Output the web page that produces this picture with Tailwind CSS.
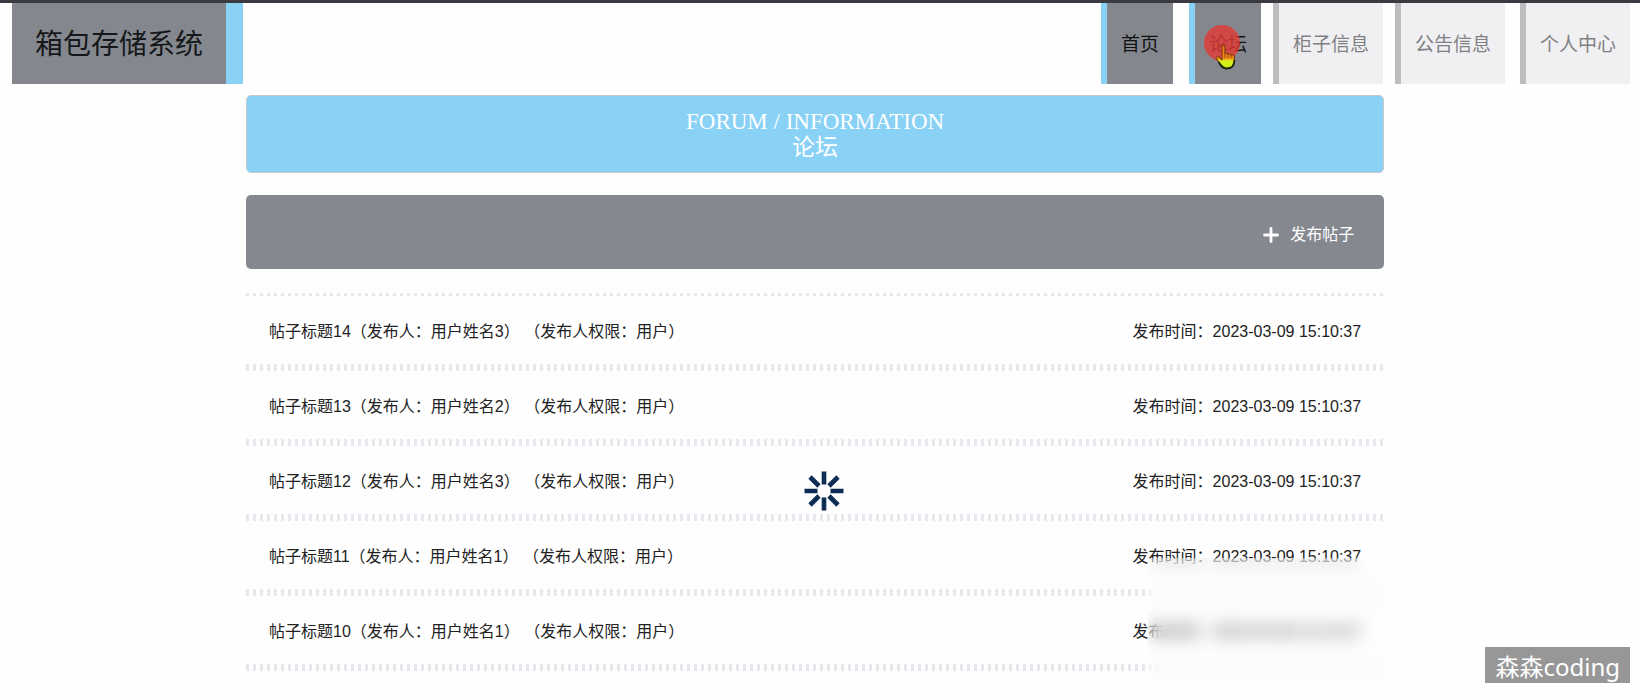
<!DOCTYPE html>
<html lang="zh-CN">
<head>
<meta charset="utf-8">
<meta name="viewport" content="width=device-width, initial-scale=1">
<title>箱包存储系统</title>
<script src="https://cdn.jsdelivr.net/npm/@tailwindcss/browser@4"></script>
</head>
<body class="relative h-screen overflow-hidden border-t-[3px] border-[#3a3a40] bg-[#fefefe] font-['Liberation_Sans','Noto_Sans_CJK_SC',sans-serif] text-base text-[#222]">
  <header class="flex justify-between pr-2.5 pl-3">
    <h1 class="flex h-[81px] items-center border-r-[17px] border-[#8ad1f6] bg-[#84888e] px-[23px] pt-0.5 text-[28px] text-[#15171a]">箱包存储系统</h1>
    <nav class="flex text-[19px] text-[#808084]">
      <a href="#" class="mr-4 flex items-center border-l-[6px] border-[#8ad1f6] bg-[#84888e] px-3.5 pt-[3px] text-[#111]">首页</a>
      <a href="#" class="relative mr-3 flex items-center border-l-[6px] border-[#8ad1f6] bg-[#84888e] px-3.5 pt-[3px] text-[#111]">论坛
        <span class="absolute top-[22px] left-[9px] size-9 rounded-full bg-[#e53935]/80"></span>
        <svg class="absolute top-[41px] left-5" width="22" height="26" viewBox="0 0 22 26">
          <defs><linearGradient id="hand" x1="0" y1="0" x2="0" y2="1"><stop offset="0" stop-color="#e8761a"/><stop offset=".56" stop-color="#ee8a10"/><stop offset=".68" stop-color="#dcf01c"/><stop offset="1" stop-color="#c8f014"/></linearGradient></defs>
          <path d="M7 2.5C7 .6 10 .6 10 2.5V10C10.400 8.600 12.700 8.800 13 10.500C13.600 9.300 15.800 9.600 16 11.300C17 10.400 19.400 11 19.400 13V17C19.400 22 16 24.500 12 24.500C8 24.500 6.200 22.500 4.600 19.500L1.500 14.800C.6 13 2.500 11.600 4.200 13L7 15.800Z" fill="url(#hand)" stroke="#8a3f14" stroke-width="1.200" stroke-linejoin="round"/>
          <path d="M3.600 18C6.200 22.500 8 24.500 12 24.500C16 24.500 19.400 22 19.400 16" fill="none" stroke="#20240a" stroke-width="1.800"/>
          <path d="M10 10V14M13 10.500V14M16 11.500V14.500" stroke="#a04c10"/>
        </svg>
      </a>
      <a href="#" class="mr-3 flex items-center border-l-[6px] border-[#bdbdbf] bg-[#f0f0f2] px-3.5 pt-[3px]">柜子信息</a>
      <a href="#" class="mr-[15px] flex items-center border-l-[6px] border-[#bdbdbf] bg-[#f0f0f2] px-3.5 pt-[3px]">公告信息</a>
      <a href="#" class="flex items-center border-l-[6px] border-[#bdbdbf] bg-[#f0f0f2] px-3.5 pt-[3px]">个人中心</a>
    </nav>
  </header>

  <main class="mr-[15.6%] ml-[15%] pt-[11px]">
    <h2 class="rounded-[5px] border border-[#c6c8cc] bg-[#8ad1f6] pt-[13px] pb-[11px] text-center font-['Liberation_Serif','Noto_Sans_CJK_SC',serif] text-[23px] leading-[26px] text-white">FORUM / INFORMATION<br>论坛</h2>

    <div class="mt-[22px] flex h-[74px] items-center justify-end rounded-[5px] bg-[#85888f] pr-[30px]">
      <button type="button" class="flex items-center gap-[11px] pt-1.5 text-white">
        <svg width="16" height="16" viewBox="0 0 16 16" stroke="#fff" stroke-width="2.800" stroke-linecap="round"><path d="M8 1.500V14.500M1.500 8H14.500"/></svg>
        发布帖子
      </button>
    </div>

    <div class="mt-6 h-[3px] bg-[repeating-linear-gradient(90deg,#e9e7ed_0_3px,transparent_3px_7px)]"></div>
    <ul>
      <li><a href="#" class="flex h-[68px] items-center justify-between px-[23px] pt-1"><span>帖子标题14（发布人：用户姓名3） （发布人权限：用户）</span><span>发布时间：2023-03-09 15:10:37</span></a>
        <div class="h-[7px] bg-[repeating-linear-gradient(90deg,#e9e7ed_0_3px,transparent_3px_7px)]"></div></li>
      <li><a href="#" class="flex h-[68px] items-center justify-between px-[23px] pt-1"><span>帖子标题13（发布人：用户姓名2） （发布人权限：用户）</span><span>发布时间：2023-03-09 15:10:37</span></a>
        <div class="h-[7px] bg-[repeating-linear-gradient(90deg,#e9e7ed_0_3px,transparent_3px_7px)]"></div></li>
      <li><a href="#" class="flex h-[68px] items-center justify-between px-[23px] pt-1"><span>帖子标题12（发布人：用户姓名3） （发布人权限：用户）</span><span>发布时间：2023-03-09 15:10:37</span></a>
        <div class="h-[7px] bg-[repeating-linear-gradient(90deg,#e9e7ed_0_3px,transparent_3px_7px)]"></div></li>
      <li><a href="#" class="flex h-[68px] items-center justify-between px-[23px] pt-1"><span>帖子标题11（发布人：用户姓名1） （发布人权限：用户）</span><span>发布时间：2023-03-09 15:10:37</span></a>
        <div class="h-[7px] bg-[repeating-linear-gradient(90deg,#e9e7ed_0_3px,transparent_3px_7px)]"></div></li>
      <li><a href="#" class="flex h-[68px] items-center justify-between px-[23px] pt-1"><span>帖子标题10（发布人：用户姓名1） （发布人权限：用户）</span><span>发布时间：2023-03-09 15:10:37</span></a>
        <div class="h-[7px] bg-[repeating-linear-gradient(90deg,#e9e7ed_0_3px,transparent_3px_7px)]"></div></li>
    </ul>
  </main>

  <!-- loading indicator -->
  <svg class="absolute top-[468px] left-[804px]" width="40" height="40" viewBox="-20 -20 40 40" stroke="#0c2c54" stroke-width="4.600">
    <path d="M0-19.500V-6.500M0 6.500V19.500M-19.500 0H-6.500M6.500 0H19.500M-14-14L-5-5M14-14L5-5M-14 14L-5 5M14 14L5 5"/>
  </svg>

  <!-- frosted patch over the list -->
  <div class="absolute top-[555px] left-[1148px] h-[130px] w-[246px] bg-[#fdfdfd]/10 backdrop-blur-[9px]"></div>

  <div class="absolute right-2.5 bottom-[15px] flex h-9 items-center bg-[#979797] px-2.5 pt-1 font-['Noto_Sans','Noto_Sans_CJK_SC',sans-serif] text-2xl leading-8 text-white">森森coding</div>
</body>
</html>
